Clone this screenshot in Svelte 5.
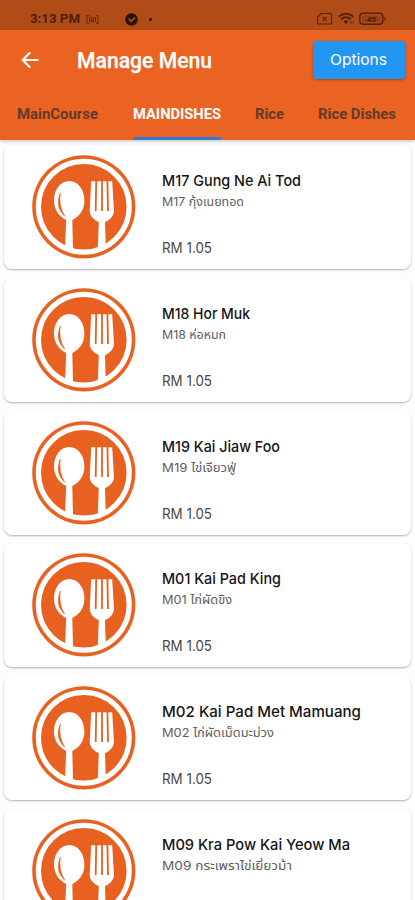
<script>
  const tabs = [
    { label: 'MainCourse', width: 81 },
    { label: 'MAINDISHES', width: 88, active: true },
    { label: 'Rice', width: 29 },
    { label: 'Rice Dishes', width: 78 }
  ];
  const items = [
    { name: 'M17 Gung Ne Ai Tod', code: 'M17', thai: 'กุ้งเนยทอด', nameWidth: 139, subWidth: 82, price: 'RM 1.05' },
    { name: 'M18 Hor Muk', code: 'M18', thai: 'ห่อหมก', nameWidth: 88, subWidth: 64, price: 'RM 1.05' },
    { name: 'M19 Kai Jiaw Foo', code: 'M19', thai: 'ไข่เจียวฟู่', nameWidth: 118, subWidth: 74, price: 'RM 1.05' },
    { name: 'M01 Kai Pad King', code: 'M01', thai: 'ไก่ผัดขิง', nameWidth: 119, subWidth: 70, price: 'RM 1.05' },
    { name: 'M02 Kai Pad Met Mamuang', code: 'M02', thai: 'ไก่ผัดเม็ดมะม่วง', nameWidth: 199, subWidth: 112, price: 'RM 1.05' },
    { name: 'M09 Kra Pow Kai Yeow Ma', code: 'M09', thai: 'กระเพราไข่เยี่ยวม้า', nameWidth: 188, subWidth: 130 }
  ];

  // Scales a single line of text horizontally to its column width.
  function fit(node, width) {
    const natural = node.getBoundingClientRect().width;
    if (natural) node.style.transform = `scaleX(${width / natural})`;
  }
</script>

<div class="screen">
  <header>
    <div class="status">
      <span class="time"><span class="line" use:fit={50}>3:13 PM</span></span>
      <svg class="cast" width="13" height="11" viewBox="0 0 13 11" fill="none" stroke="#6a2c0c" stroke-width="1.1">
        <path d="M3 1.5H1v8h2M10 1.5h2v8h-2M3.6 3v5M9.4 3v5" /><circle cx="6.5" cy="5" r="1.2" /><path d="M5 8.5l1.5-2L8 8.5" />
      </svg>
      <svg class="check" width="13" height="13" viewBox="0 0 13 13">
        <circle cx="6.5" cy="6.5" r="6.2" fill="#2b1208" />
        <path d="M3.6 5.5l2.5 3L10 4.3" fill="none" stroke="#b04c18" stroke-width="1.8" />
      </svg>
      <i class="dot"></i>
      <svg class="sys" width="70" height="14" viewBox="0 0 70 14" fill="none" stroke="#57240b" stroke-width="1.2">
        <path d="M4 1.5h9.5a1 1 0 0 1 1 1V11a1 1 0 0 1-1 1h-12a1 1 0 0 1-1-1V5zM5.5 5l4 4M9.5 5l-4 4" />
        <path d="M21.5 4.8q7.5-6 15 0M24 7.3q5-4 10 0" stroke-width="1.8" />
        <path d="M26.5 9.3q2.5-2 5 0L29 12z" fill="#57240b" stroke="none" />
        <path d="M34 9v3M36.3 9v3" stroke-width=".8" />
        <rect x="42.8" y="1.3" width="23" height="11" rx="3.2" stroke-width="1.5" />
        <rect x="45" y="3.4" width="18.5" height="6.8" rx="1.5" fill="#9c4114" stroke="none" />
        <path d="M67.5 4.8v4l1.8-2z" fill="#57240b" stroke="none" />
        <text x="54.3" y="9.8" text-anchor="middle" font-size="8" font-weight="700" fill="#4b1c07" stroke="none">45</text>
      </svg>
    </div>

    <div class="bar">
      <svg class="back" width="18" height="18" viewBox="0 0 18 18" fill="none" stroke="#fff" stroke-width="2">
        <path d="M17.4 9H1.8M9.3 1.3L1.6 9l7.7 7.7" />
      </svg>
      <h1><span class="line" use:fit={135}>Manage Menu</span></h1>
      <button><span class="line" use:fit={57}>Options</span></button>
    </div>

    <nav>
      {#each tabs as tab}
        <div class="tab" class:active={tab.active} style:width="{tab.width}px">
          <span class="line" use:fit={tab.width}>{tab.label}</span>
        </div>
      {/each}
    </nav>
  </header>

  <main>
    {#each items as item}
      <article>
        <svg class="plate" width="104" height="104" viewBox="0 0 104 104">
          <circle cx="51.8" cy="51.8" r="51.6" fill="#e86120" />
          <circle cx="51.8" cy="51.8" r="45.4" fill="none" stroke="#fff" stroke-width="5.2" />
          <g fill="#fff">
            <path d="M37.2 26C46 26 52.4 34.5 52.4 45.5C52.4 55 47.5 61.5 40.3 65L41 93.5H33L34.2 65C27 61.5 22 55 22 45.5C22 34.5 28.5 26 37.2 26Z" />
            <path d="M59.2 26.3H80.2L82 56Q82 63 73 67.2L73.8 93.5H65.8L66.8 67.2Q57.7 63 57.7 56Z" />
          </g>
          <g fill="none" stroke="#e86120">
            <path d="M64.2 25.5L63.7 56M70 25.5V56M75.4 25.5L76 56" stroke-width="1.8" />
            <path d="M28.3 38Q22.4 52 32.8 61.3Q26.4 51 28.3 38Z" fill="#e86120" stroke-width=".5" />
          </g>
        </svg>
        <div class="details">
          <h2><span class="line" use:fit={item.nameWidth}>{item.name}</span></h2>
          <p class="sub"><span class="line" use:fit={item.subWidth}>{item.code} <span class="thai">{item.thai}</span></span></p>
          {#if item.price}
            <p class="price"><span class="line" use:fit={50}>{item.price}</span></p>
          {/if}
        </div>
      </article>
    {/each}
  </main>
</div>

<style>
  :global(body) { margin: 0; }
  .screen {
    width: 415px; height: 900px; overflow: hidden;
    display: flex; flex-direction: column;
    background: #fdfdfd; font-family: Roboto, "Noto Sans", sans-serif;
  }
  .line { display: inline-block; white-space: nowrap; transform-origin: left center; }
  header {
    flex: none; height: 140px; box-sizing: border-box;
    background: #eb6323; box-shadow: 0 1px 4px rgba(0, 0, 0, .25);
    position: relative; z-index: 1;
  }
  .status {
    height: 30px; box-sizing: border-box; padding: 8px 27px 0 30px;
    display: flex; align-items: center; background: #b04c18; color: #4e2009;
  }
  .time { width: 50px; font-size: 12.5px; font-weight: 700; line-height: 22px; }
  .cast { margin-left: 6px; }
  .check { margin-left: 26px; }
  .dot { width: 3px; height: 3px; border-radius: 50%; margin-left: 11px; background: #2b1208; }
  .sys { margin-left: auto; margin-right: 1px; font-family: Roboto, sans-serif; }
  .bar { height: 60px; display: flex; align-items: center; padding: 0 10px 0 21px; }
  .back { flex: none; }
  h1 { margin: 2px 0 0 38px; width: 135px; font-size: 21.5px; font-weight: 500; line-height: 30px; color: #fff; -webkit-text-stroke: .25px #fff; }
  button {
    margin-left: auto; width: 92px; height: 38px; padding: 0 0 2px 17px;
    border: 0; border-radius: 3px; background: #2196f3; color: #fff;
    text-align: left; font: 400 15px Inter, sans-serif;
    box-shadow: 0 1px 3px rgba(0, 0, 0, .3);
  }
  nav { height: 50px; display: flex; padding: 0 19px 0 17px; justify-content: space-between; }
  .tab { box-sizing: border-box; padding-top: 14px; font-size: 14px; font-weight: 700; line-height: 20px; color: #623c2a; }
  .active { color: #fff; border-bottom: 3px solid #3477d4; margin-left: 1px; }
  main { padding: 5px 4px 0; display: flex; flex-direction: column; gap: 8.8px; }
  article {
    flex: none; height: 124px; box-sizing: border-box; padding: 10px 0 0 28px;
    display: flex; gap: 25.5px; border-radius: 8px; background: #fff;
    box-shadow: 0 1px 2px rgba(0, 0, 0, .3);
  }
  .plate { flex: none; }
  .details { font-family: Inter, "Noto Sans", sans-serif; padding-top: 15px; }
  h2 { margin: 0; font-size: 15px; font-weight: 500; line-height: 22px; color: #161616; }
  .sub { margin: 0; height: 20px; font-size: 12px; line-height: 20px; color: #5e5e5e; font-weight: 400; }
  .thai { font-family: "Noto Sans Thai", "Noto Sans", sans-serif; }
  .price { margin: 24px 0 0; font-size: 14px; line-height: 24px; color: #484848; }
</style>
